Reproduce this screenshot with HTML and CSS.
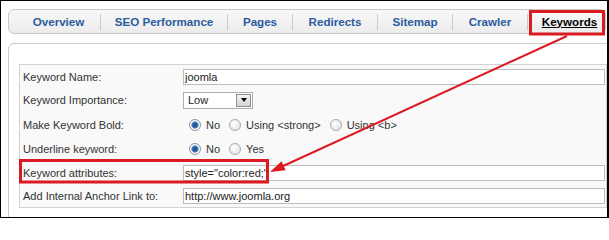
FILE: index.html
```html
<!DOCTYPE html>
<html lang="en">
<head>
<meta charset="utf-8">
<title>Keywords</title>
<link rel="stylesheet" href="styles.css">
</head>
<body>
<div class="frame">
  <nav class="tabs">
    <ul class="tab-list">
      <li class="tab tab-overview"><a href="#">Overview</a></li>
      <li class="tab tab-seo"><a href="#">SEO Performance</a></li>
      <li class="tab tab-pages"><a href="#">Pages</a></li>
      <li class="tab tab-redirects"><a href="#">Redirects</a></li>
      <li class="tab tab-sitemap"><a href="#">Sitemap</a></li>
      <li class="tab tab-crawler"><a href="#">Crawler</a></li>
      <li class="tab tab-keywords is-active"><a href="#">Keywords</a></li>
    </ul>
  </nav>
  <div class="panel">
    <table class="form-table">
      <colgroup><col class="col-label"><col class="col-field"></colgroup>
      <tr class="row-text">
        <td class="label">Keyword Name:</td>
        <td class="field"><input class="text-input" type="text" value="joomla"></td>
      </tr>
      <tr class="row-select">
        <td class="label">Keyword Importance:</td>
        <td class="field">
          <span class="select"><span class="select-value">Low</span><span class="select-btn"><span class="caret"></span></span></span>
        </td>
      </tr>
      <tr class="row-radio">
        <td class="label">Make Keyword Bold:</td>
        <td class="field">
          <div class="options">
            <label class="option"><input class="radio" type="radio" name="bold" checked><span>No</span></label>
            <label class="option"><input class="radio" type="radio" name="bold"><span>Using &lt;strong&gt;</span></label>
            <label class="option"><input class="radio" type="radio" name="bold"><span>Using &lt;b&gt;</span></label>
          </div>
        </td>
      </tr>
      <tr class="row-radio-last">
        <td class="label">Underline keyword:</td>
        <td class="field">
          <div class="options">
            <label class="option"><input class="radio" type="radio" name="underline" checked><span>No</span></label>
            <label class="option"><input class="radio" type="radio" name="underline"><span>Yes</span></label>
          </div>
        </td>
      </tr>
      <tr class="row-text">
        <td class="label">Keyword attributes:</td>
        <td class="field"><input class="text-input" type="text" value="style=&quot;color:red;&quot;"></td>
      </tr>
      <tr class="row-text">
        <td class="label">Add Internal Anchor Link to:</td>
        <td class="field"><input class="text-input" type="text" value="http://www.joomla.org"></td>
      </tr>
    </table>
  </div>
  <svg class="annotations" width="609" height="218" viewBox="0 0 609 218" aria-hidden="true">
    <rect x="530.5" y="11.5" width="73" height="22.5" fill="none" stroke="#dc1a22" stroke-width="3"/>
    <rect x="20.5" y="160.5" width="247" height="21.5" fill="none" stroke="#dc1a22" stroke-width="3"/>
    <line x1="567" y1="36" x2="282" y2="166.5" stroke="#dc1a22" stroke-width="2"/>
    <polygon points="270,172 285.7,170.3 281.5,161.3" fill="#dc1a22"/>
  </svg>
</div>
</body>
</html>
```
FILE: styles.css
```css
* { box-sizing: border-box; }

body {
  margin: 0;
  background: #fff;
  font-family: "Liberation Sans", Arial, sans-serif;
}

.frame {
  position: relative;
  width: 609px;
  height: 218px;
  border: 1px solid #000;
  border-right-width: 2px;
  overflow: hidden;
  background: #fff;
}

.tabs {
  margin: 8px 0 0 7px;
  width: 598px;
  height: 25px;
  border: 1px solid #c8c8c8;
  border-radius: 6px;
  background: linear-gradient(#f8f8f8, #ececec);
}

.tab-list {
  list-style: none;
  margin: 0;
  padding: 0 0 0 8px;
  display: flex;
  align-items: center;
  height: 100%;
}

.tab {
  flex: none;
  height: 16px;
  line-height: 16px;
  text-align: center;
  font-size: 11.6px;
  font-weight: bold;
}

.tab + .tab { border-left: 1px solid #cacaca; }

.tab a { color: #2b5b9e; text-decoration: none; }
.tab.is-active a { color: #000; text-decoration: underline; }

.tab-overview { width: 83px; }
.tab-seo { width: 127px; }
.tab-pages { width: 65px; }
.tab-redirects { width: 85px; }
.tab-sitemap { width: 75px; }
.tab-crawler { width: 75px; }
.tab-keywords { width: 84px; }

.panel {
  margin: 9px 0 0 7px;
  width: 620px;
  height: 200px;
  padding: 20px 10px;
  border: 1px solid #cccccc;
  border-radius: 6px;
  background: #fff;
}

.form-table {
  width: 588px;
  table-layout: fixed;
  border-collapse: separate;
  border-spacing: 0;
  border: 1px solid #d2d2d2;
  background: #f9f9f9;
}

.col-label { width: 163px; }

.form-table td {
  padding: 0;
  height: 23px;
  vertical-align: middle;
  font-size: 11px;
  color: #333;
  white-space: nowrap;
}

.form-table td.label { padding-left: 3px; }
.form-table td.field { padding-right: 1px; }

.row-select td { height: 24px; }
.row-radio td { height: 25px; }
.row-radio-last td { height: 24px; }

.text-input {
  display: block;
  width: 100%;
  height: 16px;
  margin: 0;
  padding: 0 1px;
  border: 1px solid #bdbdbd;
  background: #fff;
  font: 11px "Liberation Sans", Arial, sans-serif;
  color: #222;
  outline: none;
}

.select {
  display: flex;
  align-items: center;
  width: 70px;
  height: 17px;
  border: 1px solid #a9afb6;
  background: #fff;
  font-size: 11px;
  color: #222;
}

.select-value { flex: 1; padding-left: 4px; }

.select-btn {
  display: flex;
  align-items: center;
  justify-content: center;
  width: 15px;
  height: 13px;
  margin-right: 1px;
  border: 1px solid #8e8f8f;
  background: linear-gradient(#f4f4f4, #d4d4d4);
}

.caret {
  width: 0;
  height: 0;
  border-left: 3.5px solid transparent;
  border-right: 3.5px solid transparent;
  border-top: 4px solid #000;
}

.options {
  display: flex;
  align-items: center;
  padding-left: 6px;
}

.option {
  display: flex;
  align-items: center;
  gap: 5px;
  margin-right: 9px;
}

.radio {
  -webkit-appearance: none;
  appearance: none;
  flex: none;
  margin: 0;
  width: 12px;
  height: 12px;
  border-radius: 50%;
  border: 1px solid #a3abb4;
  background: radial-gradient(circle at 40% 35%, #ffffff, #dcdcdc);
}

.radio:checked {
  border-color: #8a98a8;
  background: radial-gradient(circle, #1d4f86 0, #2f68a6 2.5px, #6f9dcc 3.3px, #ffffff 4px, #e2e2e2 6px);
}

.annotations {
  position: absolute;
  top: -1px;
  left: -1px;
  pointer-events: none;
}
```
